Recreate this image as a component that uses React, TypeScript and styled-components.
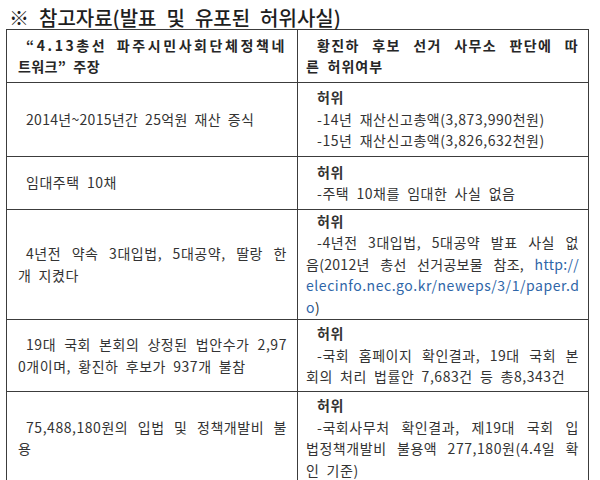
import styled, { createGlobalStyle } from "styled-components";
import { ReactNode } from "react";

const GlobalStyle = createGlobalStyle`
  body {
    margin: 0;
    background: #ffffff;
    font-family: "Noto Sans CJK KR", "Noto Sans", sans-serif;
    color: #2c2c2c;
  }
`;

const Page = styled.div`
  width: 600px;
  height: 480px;
  overflow: hidden;
  box-sizing: border-box;
  padding: 6px 0 0 6px;
`;

const Title = styled.h2`
  margin: 0;
  padding-left: 3px;
  height: 23px;
  font-size: 20px;
  line-height: 23px;
  font-weight: 500;
  word-spacing: 5.5px;
  color: #1e1e1e;
  white-space: nowrap;
`;

const Table = styled.table`
  border-collapse: collapse;
  table-layout: fixed;
  width: 583px;
`;

const Row = styled.tr<{ $h: number }>`
  height: ${(p) => p.$h}px;
`;

const Cell = styled.td<{ $side: "claim" | "verdict"; $head?: boolean }>`
  border: 1px solid #3c3c3c;
  vertical-align: middle;
  padding: ${(p) => (p.$side === "claim" ? "0 10px 0 11px" : "0 9px 0 8px")};
  font-size: 14px;
  line-height: 21.5px;
  letter-spacing: 0.55px;
  word-spacing: 3.5px;
  font-weight: ${(p) => (p.$head ? 700 : 400)};
  color: ${(p) => (p.$head ? "#262626" : "#333333")};
`;

const Line = styled.span<{ $indent?: number; $justify?: boolean; $spread?: number; $bold?: boolean }>`
  display: block;
  padding-left: ${(p) => p.$indent ?? 0}px;
  white-space: nowrap;
  text-align: left;
  text-align-last: ${(p) => (p.$justify ? "justify" : "auto")};
  ${(p) => (p.$spread !== undefined ? `letter-spacing: ${p.$spread}px;` : "")}
  font-weight: ${(p) => (p.$bold ? 700 : "inherit")};
`;

const Link = styled.span`
  color: #2f66a8;
`;

type LineData = {
  text: ReactNode;
  indent?: boolean;
  justify?: boolean;
  spread?: number;
  bold?: boolean;
};

type RowData = {
  h: number;
  claim: LineData[];
  verdict: LineData[];
  head?: boolean;
};

const rows: RowData[] = [
  {
    h: 53,
    head: true,
    claim: [
      { text: "“4.13총선 파주시민사회단체정책네", indent: true, justify: true, spread: 2.6 },
      { text: "트워크” 주장", spread: 0.4 },
    ],
    verdict: [
      { text: "황진하 후보 선거 사무소 판단에 따", indent: true, justify: true, spread: 1.4 },
      { text: "른 허위여부", spread: 1 },
    ],
  },
  {
    h: 74,
    claim: [{ text: "2014년~2015년간 25억원 재산 증식", indent: true, spread: 0.3 }],
    verdict: [
      { text: "허위", indent: true, bold: true },
      { text: "-14년 재산신고총액(3,873,990천원)", indent: true },
      { text: "-15년 재산신고총액(3,826,632천원)", indent: true },
    ],
  },
  {
    h: 53,
    claim: [{ text: "임대주택 10채", indent: true }],
    verdict: [
      { text: "허위", indent: true, bold: true },
      { text: "-주택 10채를 임대한 사실 없음", indent: true },
    ],
  },
  {
    h: 110,
    claim: [
      { text: "4년전 약속 3대입법, 5대공약, 딸랑 한", indent: true, justify: true },
      { text: "개 지켰다" },
    ],
    verdict: [
      { text: "허위", indent: true, bold: true },
      { text: "-4년전 3대입법, 5대공약 발표 사실 없", indent: true, justify: true },
      {
        text: (
          <>
            음(2012년 총선 선거공보물 참조, <Link>http://</Link>
          </>
        ),
        justify: true,
        spread: 0.3,
      },
      { text: <Link>elecinfo.nec.go.kr/neweps/3/1/paper.d</Link>, spread: 0.55 },
      {
        text: (
          <>
            <Link>o</Link>)
          </>
        ),
      },
    ],
  },
  {
    h: 72,
    claim: [
      { text: "19대 국회 본회의 상정된 법안수가 2,97", indent: true, justify: true },
      { text: "0개이며, 황진하 후보가 937개 불참" },
    ],
    verdict: [
      { text: "허위", indent: true, bold: true },
      { text: "-국회 홈페이지 확인결과, 19대 국회 본", indent: true, justify: true },
      { text: "회의 처리 법률안 7,683건 등 총8,343건" },
    ],
  },
  {
    h: 93,
    claim: [
      { text: "75,488,180원의 입법 및 정책개발비 불", indent: true, justify: true },
      { text: "용" },
    ],
    verdict: [
      { text: "허위", indent: true, bold: true },
      { text: "-국회사무처 확인결과, 제19대 국회 입", indent: true, justify: true },
      { text: "법정책개발비 불용액 277,180원(4.4일 확", justify: true },
      { text: "인 기준)" },
    ],
  },
];

function Lines({ items, indent }: { items: LineData[]; indent: number }) {
  return (
    <>
      {items.map((l, i) => (
        <Line
          key={i}
          $indent={l.indent ? indent : 0}
          $justify={l.justify}
          $spread={l.spread}
          $bold={l.bold}
        >
          {l.text}
        </Line>
      ))}
    </>
  );
}

export default function App() {
  return (
    <>
      <GlobalStyle />
      <Page>
        <Title>※ 참고자료(발표 및 유포된 허위사실)</Title>
        <Table>
          <tbody>
            {rows.map((r, i) => (
              <Row key={i} $h={r.h}>
                <Cell $side="claim" $head={r.head}>
                  <Lines items={r.claim} indent={8} />
                </Cell>
                <Cell $side="verdict" $head={r.head}>
                  <Lines items={r.verdict} indent={11} />
                </Cell>
              </Row>
            ))}
          </tbody>
        </Table>
      </Page>
    </>
  );
}
